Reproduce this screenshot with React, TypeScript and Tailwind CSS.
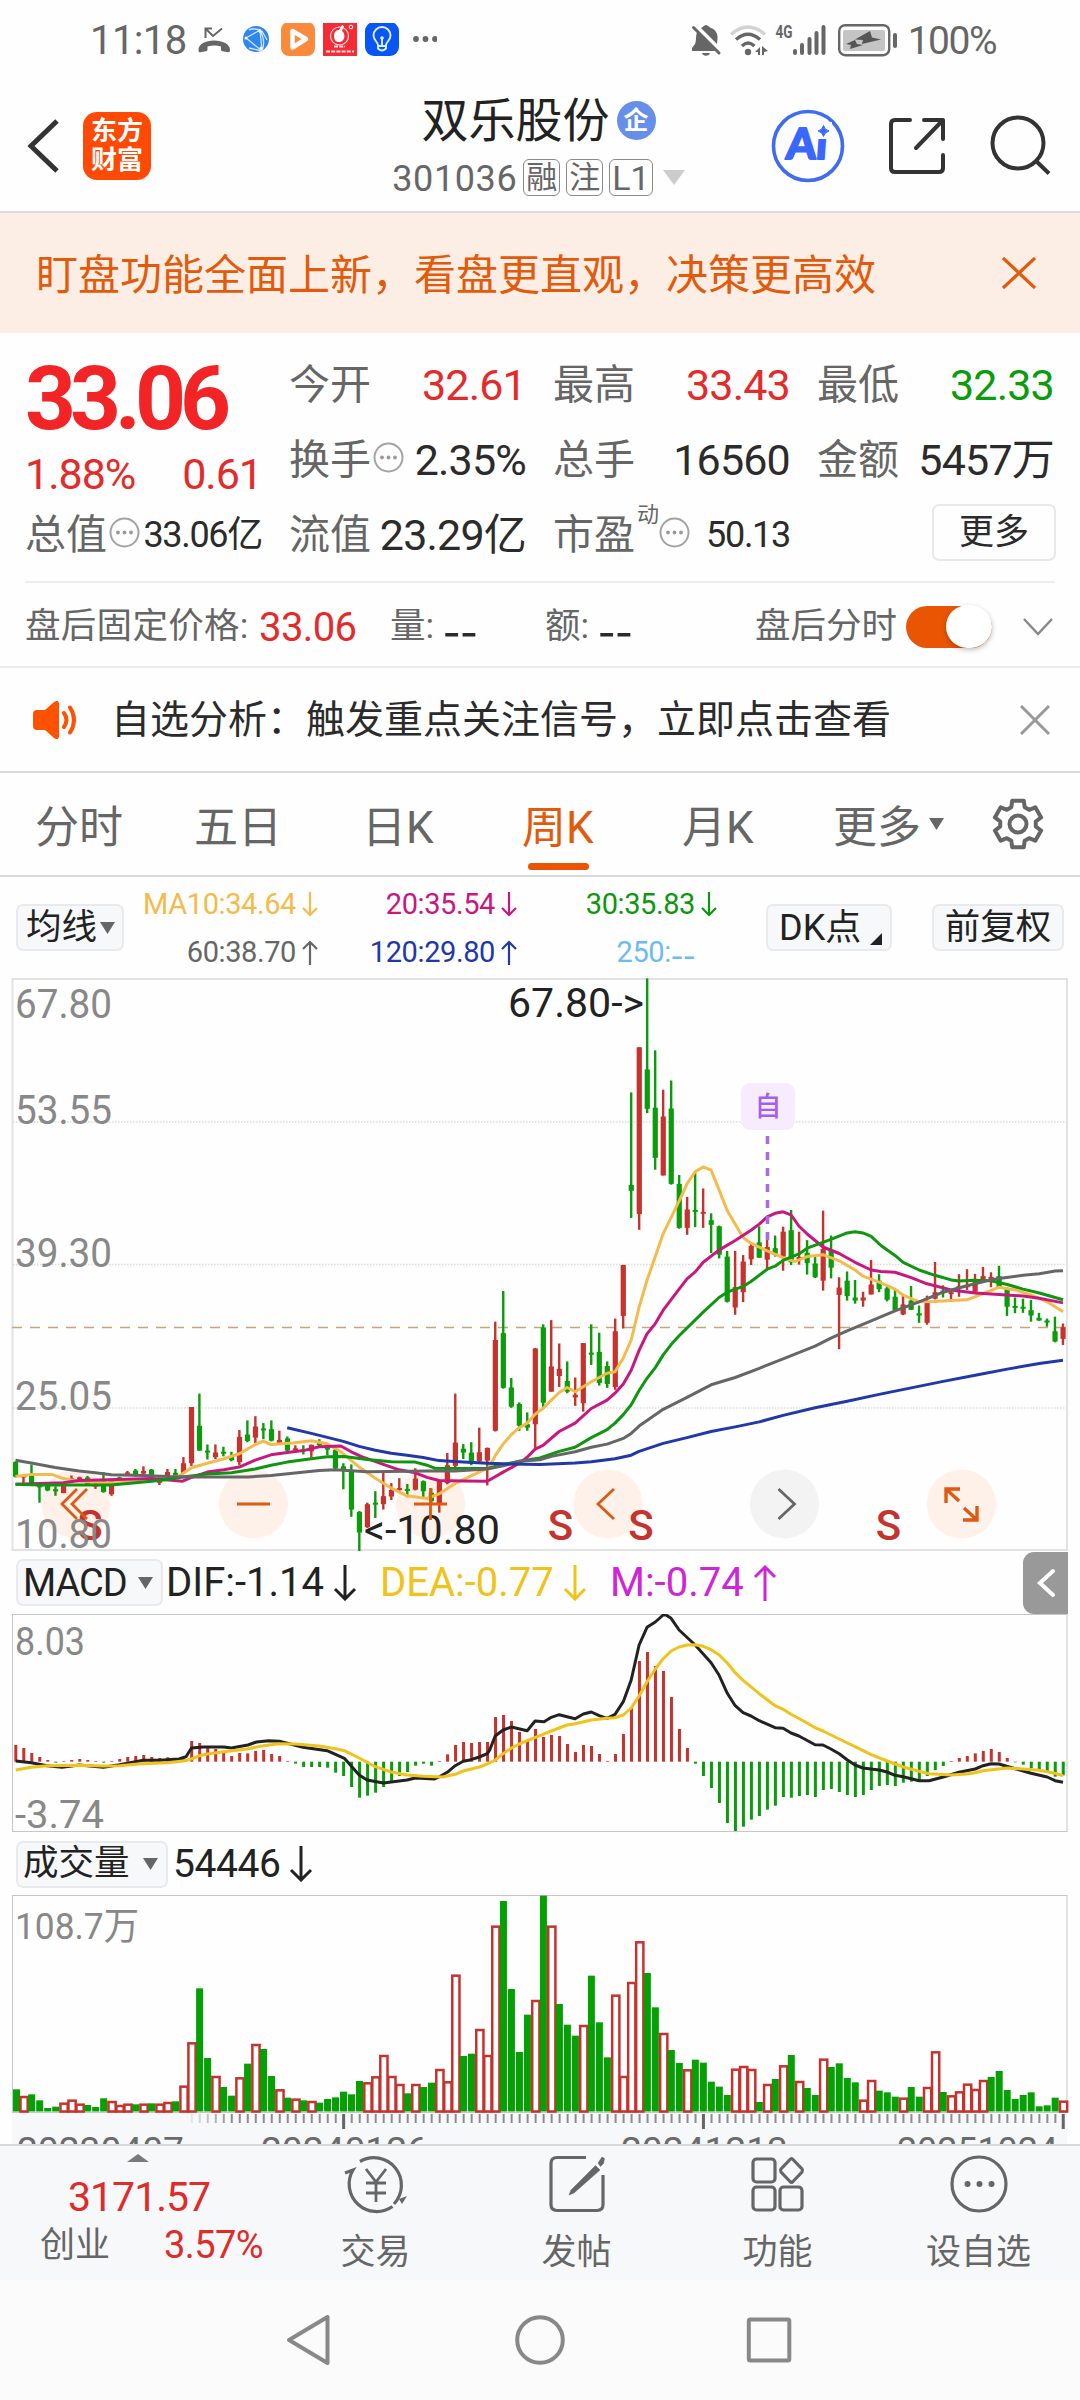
import type { ReactNode } from 'react';

// x step between two weekly bars, in chart units
const STEP = 23.22;
const UNIT_X = 2.904;
const RED = '#c6322d';
const GREEN = '#0a9c0a';

// [rising, high, body top, body bottom, low]
const candles: number[][] = [
    [0, 1310, 1312, 1350, 1352], [1, 1345, 1346, 1352, 1368], [0, 1318, 1347, 1368, 1370], [0, 1370, 1370, 1378, 1418],
    [0, 1368, 1370, 1386, 1388], [0, 1375, 1383, 1388, 1400], [1, 1368, 1370, 1393, 1393], [1, 1347, 1354, 1358, 1360],
    [1, 1350, 1352, 1357, 1360], [0, 1348, 1352, 1372, 1374], [1, 1360, 1368, 1376, 1382], [0, 1338, 1360, 1390, 1392],
    [1, 1358, 1360, 1396, 1400], [0, 1350, 1352, 1356, 1358], [1, 1335, 1339, 1345, 1348], [0, 1330, 1334, 1345, 1350],
    [1, 1323, 1335, 1342, 1348], [0, 1330, 1332, 1348, 1350], [1, 1352, 1355, 1366, 1372], [1, 1330, 1338, 1350, 1352],
    [0, 1330, 1340, 1350, 1352], [1, 1299, 1315, 1340, 1342], [1, 1168, 1168, 1315, 1322], [0, 1133, 1217, 1282, 1282],
    [0, 1266, 1282, 1287, 1305], [1, 1266, 1287, 1299, 1304], [0, 1272, 1285, 1290, 1297], [0, 1285, 1297, 1307, 1310],
    [1, 1228, 1246, 1312, 1320], [0, 1203, 1240, 1257, 1260], [1, 1192, 1219, 1248, 1262], [0, 1210, 1224, 1228, 1252],
    [0, 1203, 1226, 1256, 1258], [1, 1230, 1254, 1262, 1264], [0, 1245, 1250, 1282, 1284], [1, 1268, 1276, 1280, 1282],
    [0, 1268, 1278, 1282, 1292], [1, 1266, 1267, 1284, 1300], [0, 1252, 1262, 1268, 1272], [0, 1270, 1274, 1279, 1294],
    [0, 1276, 1280, 1328, 1330], [0, 1315, 1323, 1335, 1383], [0, 1318, 1335, 1436, 1455], [0, 1440, 1442, 1496, 1545],
    [1, 1418, 1422, 1482, 1484], [0, 1388, 1418, 1422, 1458], [1, 1340, 1401, 1422, 1436], [1, 1367, 1385, 1402, 1411],
    [1, 1354, 1380, 1384, 1387], [0, 1369, 1382, 1386, 1404], [1, 1328, 1355, 1384, 1386], [0, 1360, 1362, 1388, 1404],
    [0, 1381, 1392, 1414, 1420], [1, 1360, 1362, 1422, 1444], [1, 1288, 1320, 1367, 1370], [1, 1133, 1261, 1322, 1326],
    [0, 1265, 1277, 1287, 1304], [0, 1260, 1287, 1316, 1320], [1, 1222, 1286, 1310, 1312], [1, 1274, 1275, 1308, 1373],
    [1, 945, 993, 1230, 1232], [0, 865, 975, 1118, 1120], [0, 1092, 1117, 1167, 1170], [0, 1156, 1160, 1217, 1230],
    [0, 1182, 1213, 1222, 1230], [1, 1014, 1015, 1213, 1275], [0, 952, 960, 1157, 1172], [1, 941, 1062, 1128, 1128],
    [1, 1002, 1068, 1087, 1116], [0, 1049, 1100, 1128, 1132], [1, 1091, 1136, 1143, 1165], [1, 1001, 1001, 1158, 1180],
    [0, 952, 1026, 1031, 1058], [0, 974, 1024, 1105, 1112], [0, 1049, 1061, 1108, 1118], [1, 937, 970, 1116, 1123],
    [1, 797, 797, 930, 963], [0, 346, 588, 603, 674], [1, 228, 228, 664, 705], [0, 48, 286, 389, 400],
    [0, 236, 386, 517, 548], [1, 339, 409, 563, 563], [0, 315, 388, 585, 587], [0, 562, 585, 700, 702],
    [1, 619, 652, 700, 718], [0, 556, 653, 658, 698], [1, 597, 658, 663, 700], [0, 662, 680, 692, 766],
    [0, 694, 696, 770, 780], [0, 760, 775, 893, 895], [1, 760, 855, 908, 927], [1, 771, 788, 868, 894],
    [1, 738, 747, 782, 797], [0, 696, 738, 778, 778], [1, 728, 750, 783, 805], [0, 720, 753, 770, 775],
    [1, 697, 710, 775, 812], [0, 653, 706, 790, 797], [1, 710, 776, 780, 796], [0, 732, 765, 792, 822],
    [0, 775, 793, 829, 831], [1, 655, 755, 838, 864], [0, 720, 760, 804, 832], [1, 829, 856, 875, 1017],
    [0, 814, 838, 878, 890], [0, 836, 882, 890, 898], [1, 867, 882, 890, 906], [1, 784, 848, 874, 874],
    [0, 821, 838, 860, 868], [0, 850, 858, 888, 892], [0, 862, 880, 915, 915], [1, 874, 900, 926, 928],
    [0, 852, 890, 914, 914], [0, 903, 923, 929, 948], [1, 877, 893, 948, 953], [1, 789, 868, 885, 887],
    [0, 850, 864, 870, 882], [1, 862, 868, 872, 890], [1, 821, 852, 857, 880], [1, 808, 850, 855, 862],
    [1, 820, 840, 867, 868], [1, 802, 826, 838, 842], [1, 816, 828, 838, 855], [0, 799, 826, 855, 857],
    [0, 855, 858, 906, 930], [0, 882, 904, 908, 923], [0, 885, 906, 910, 922], [0, 888, 915, 929, 945],
    [0, 922, 935, 942, 943], [0, 937, 942, 946, 958], [0, 932, 970, 997, 999], [1, 950, 960, 990, 1006],
];

const averages = [
    {
        color: '#f3bb4c',
        points: '45,1350 91,1344 150,1344 184,1355 230,1362 300,1366 347,1366 416,1362 480,1354 520,1348 556,1327 602,1315 648,1304 695,1290 741,1266 764,1257 787,1266 850,1262 904,1256 950,1264 990,1285 1043,1325 1090,1354 1136,1380 1182,1400 1240,1407 1275,1395 1322,1368 1368,1348 1422,1325 1438,1295 1461,1265 1485,1240 1508,1222 1531,1210 1554,1187 1577,1172 1601,1150 1624,1130 1647,1117 1670,1128 1717,1102 1763,1080 1786,1076 1810,1040 1833,993 1856,907 1879,837 1903,775 1926,715 1972,630 1995,585 2019,553 2042,541 2065,549 2088,600 2112,655 2158,725 2181,740 2228,760 2274,778 2308,788 2344,775 2390,770 2437,786 2483,810 2506,826 2553,842 2599,860 2623,876 2669,893 2715,892 2762,890 2808,888 2855,872 2901,855 2948,862 2994,875 3041,893 3087,919',
    },
    {
        color: '#c8187f',
        points: '45,1370 184,1366 230,1360 370,1357 440,1355 530,1362 556,1352 602,1338 650,1332 695,1325 741,1307 787,1293 834,1287 881,1282 927,1272 990,1270 1020,1285 1050,1298 1113,1318 1159,1332 1206,1340 1240,1352 1275,1360 1345,1361 1415,1362 1461,1338 1508,1315 1530,1300 1554,1278 1577,1268 1624,1232 1670,1210 1717,1172 1763,1150 1786,1132 1810,1108 1833,1072 1856,1020 1879,977 1903,950 1926,915 1972,860 1995,833 2019,815 2042,790 2088,758 2135,733 2181,706 2205,690 2228,671 2251,662 2274,658 2297,666 2320,695 2344,716 2390,750 2437,767 2483,790 2530,810 2558,814 2599,816 2646,830 2692,846 2762,862 2832,870 2901,874 2971,878 3018,884 3087,896',
    },
    {
        color: '#0e960e',
        points: '45,1370 114,1372 323,1372 370,1368 440,1362 480,1358 520,1352 602,1343 672,1340 741,1330 787,1320 834,1312 904,1303 950,1298 1000,1297 1066,1305 1136,1311 1206,1312 1240,1320 1262,1328 1415,1329 1450,1320 1510,1310 1568,1301 1624,1284 1670,1273 1717,1248 1763,1227 1786,1210 1810,1188 1833,1162 1856,1125 1879,1093 1903,1065 1926,1032 1949,1005 1972,982 2042,920 2088,882 2112,868 2158,853 2181,840 2228,808 2251,800 2274,785 2320,768 2344,753 2413,730 2460,713 2483,710 2506,713 2530,722 2558,746 2599,772 2623,790 2669,810 2715,824 2762,836 2785,839 2832,837 2878,838 2925,848 2971,860 3018,870 3087,888',
    },
    {
        color: '#666666',
        points: '45,1307 91,1314 160,1326 230,1335 277,1340 323,1345 416,1347 486,1350 556,1351 720,1351 787,1347 850,1341 927,1334 974,1332 1066,1337 1240,1335 1322,1335 1415,1330 1461,1322 1508,1310 1568,1306 1601,1297 1670,1285 1717,1273 1763,1265 1810,1250 1833,1237 1856,1218 1926,1174 1995,1143 2065,1110 2135,1091 2205,1067 2274,1042 2367,1009 2413,988 2460,969 2530,943 2599,917 2669,893 2739,868 2808,851 2878,836 2901,832 2971,824 3018,820 3064,813 3087,812',
    },
    {
        color: '#2138a8',
        points: '834,1222 904,1237 997,1258 1043,1271 1090,1281 1136,1289 1182,1294 1229,1300 1275,1308 1345,1312 1415,1315 1485,1317 1568,1318 1670,1314 1717,1311 1786,1303 1833,1294 1856,1284 1926,1263 1995,1248 2065,1232 2135,1220 2205,1207 2274,1190 2367,1170 2460,1153 2553,1135 2646,1118 2739,1101 2832,1085 2925,1069 3018,1054 3087,1046',
    },
];

const macd = [
    615, 624, 639, 651, 660, 668, 664, 660, 657, 660, 663, 668, 663, 657, 651, 648, 645, 651, 654, 652, 656, 650,
    603, 609, 619, 627, 639, 648, 639, 640, 633, 630, 642, 648, 663, 671, 681, 681, 681, 683, 698, 708, 741, 773,
    767, 758, 741, 723, 708, 696, 677, 671, 677, 663, 643, 615, 606, 609, 606, 606, 531, 525, 543, 576, 603, 567,
    591, 585, 588, 612, 636, 615, 618, 642, 663, 642, 582, 502, 363, 336, 378, 393, 471, 567, 624, 671, 708, 744,
    789, 849, 873, 860, 839, 828, 809, 797, 771, 773, 768, 765, 771, 750, 747, 756, 765, 771, 765, 750, 738, 735,
    738, 728, 725, 720, 708, 690, 678, 663, 654, 648, 640, 633, 627, 636, 654, 665, 674, 684, 690, 696, 710, 706,
];

const difLine =
    '46,663 91,668 137,677 180,682 230,675 300,682 347,674 416,661 463,661 520,657 540,650 556,624 590,621 650,621 672,624 720,615 745,606 780,602 811,604 840,611 880,622 950,632 1000,655 1020,678 1043,705 1066,720 1113,729 1182,720 1206,714 1262,717 1275,711 1299,697 1322,677 1345,664 1368,659 1392,651 1415,641 1422,630 1438,588 1461,570 1485,561 1531,572 1554,543 1580,545 1601,532 1624,524 1647,530 1670,536 1694,522 1717,516 1740,527 1763,535 1786,523 1810,485 1833,420 1856,315 1879,262 1903,246 1926,225 1933,224 1949,235 1972,270 2019,315 2065,368 2088,405 2112,460 2135,497 2158,518 2181,528 2205,542 2251,563 2274,565 2297,579 2320,588 2367,614 2390,615 2413,627 2437,641 2460,659 2483,675 2506,684 2553,690 2576,696 2599,706 2623,710 2669,722 2698,722 2739,711 2785,697 2832,687 2855,677 2878,671 2901,672 2948,686 2994,700 3041,711 3064,722 3087,727';
const deaLine =
    '46,690 91,682 137,677 230,676 300,678 347,677 400,672 486,668 532,663 556,657 579,647 602,642 650,635 717,627 764,617 811,611 857,612 927,618 974,626 1000,632 1043,654 1090,680 1136,696 1182,705 1229,709 1285,711 1322,703 1345,693 1392,681 1415,672 1438,660 1461,641 1485,624 1508,612 1531,602 1568,587 1601,573 1647,555 1670,551 1717,540 1763,535 1786,533 1810,525 1833,504 1856,468 1879,425 1903,387 1926,356 1949,333 1972,321 1995,315 2019,314 2042,319 2065,329 2088,344 2112,369 2135,398 2158,421 2205,461 2251,497 2274,508 2297,523 2344,549 2367,563 2390,573 2437,597 2483,620 2530,644 2576,663 2623,681 2669,694 2698,701 2762,705 2808,702 2832,698 2855,692 2925,684 2971,687 3018,691 3064,700 3087,707';

// r = rising week (hollow), g = falling week (solid)
const volumes = (
    'g778 r798 g793 g811 g834 g830 r818 r809 r821 g825 g831 g805 r813 r825 r821 g823 r821 g820 r821 r816 g814 r767 ' +
    'r637 g475 g684 r738 g771 g797 r742 g701 r642 g657 g738 r778 g803 r806 g811 r813 g818 g807 g802 g785 g793 g753 ' +
    'r757 r739 r675 r738 r762 g790 r762 g771 g758 r717 r754 r434 g678 g671 r597 r675 r287 g213 g477 g666 g554 r510 ' +
    'g197 r287 g522 g584 g617 r585 g437 g577 g682 r494 r738 r456 r334 g429 g532 r609 g660 g699 r718 g689 g698 g755 ' +
    'g770 g795 r716 r708 r717 g816 r762 g747 r706 g675 r753 g774 g795 r686 g711 g700 g744 g757 r809 r750 g782 g787 ' +
    'g800 r803 g771 g800 r771 r664 g786 r796 r784 r761 r777 r750 g741 g723 g780 g807 g795 g787 g829 g826 g803 r812'
).split(' ');

const barX = (i: number) => (45 + STEP * i) / UNIT_X;
const priceY = (v: number) => v / 2.613 - 18;
const macdY = (v: number) => v / 3 - 74;
const volumeY = (v: number) => v / 3 - 65;

function toPath(points: string, y: (v: number) => number) {
    return points
        .split(' ')
        .map((p) => {
            const [a, b] = p.split(',').map(Number);
            return `${(a / UNIT_X).toFixed(1)},${y(b).toFixed(1)}`;
        })
        .join(' ');
}

function Arrow({ up = false, big = false }: { up?: boolean; big?: boolean }) {
    return (
        <svg
            className={big ? 'h-[36px] w-[24px]' : 'h-[25px] w-[16px]'}
            viewBox={big ? '0 0 24 36' : '0 0 16 25'}
            fill="none"
            stroke="currentColor"
            strokeWidth={big ? 3 : 2.2}
        >
            {big ? (
                <path d={up ? 'M12 36V2M2 12L12 2l10 10' : 'M12 0v34M2 24l10 10 10-10'} />
            ) : (
                <path d={up ? 'M8 25V2M1 9l7-7 7 7' : 'M8 0v23M1 16l7 7 7-7'} />
            )}
        </svg>
    );
}

function Triangle({ className = '' }: { className?: string }) {
    return (
        <svg className={`h-[12px] w-[15px] ${className}`} viewBox="0 0 15 12" fill="#666">
            <path d="M0 0h15L7.5 12z" />
        </svg>
    );
}

// wide placeholder for a missing value
function Dashes({ className = '' }: { className?: string }) {
    return <span className={`font-['Noto_Sans_CJK_SC',sans-serif] ${className}`}>--</span>;
}

function InfoDots() {
    return (
        <svg className="mb-[6px] h-[31px] w-[31px] shrink-0" viewBox="0 0 31 31" fill="#999">
            <circle cx="15.5" cy="15.5" r="14" fill="none" stroke="#a3a3a3" strokeWidth="2" />
            <circle cx="9" cy="15.5" r="1.9" />
            <circle cx="15.5" cy="15.5" r="1.9" />
            <circle cx="22" cy="15.5" r="1.9" />
        </svg>
    );
}

function StatusBar() {
    return (
        <div className="flex h-[80px] items-center pr-[84px] pl-[90px] text-[#666]">
            <span className="w-[107px] pt-[2px] text-[40px] tracking-[-0.6px]">11:18</span>
            <svg className="h-[34px] w-[240px]" viewBox="197 23 240 34">
                <g fill="none" stroke="#666" strokeWidth="2">
                    <path d="M212 28.500h-6.500V38M206 29l7 7 9-7.500" />
                </g>
                <path fill="#666" d="M198.500 50c0-6 7-9.500 15.500-9.500s16 3.500 16 9.500c0 2-.7 2.500-2 2.300l-5.500-1c-1-.2-1.500-.8-1.500-2v-2.800c-4.500-1.300-9-1.300-13.500 0v2.800c0 1.200-.5 1.800-1.500 2l-5.500 1c-1.300.2-2-.3-2-2.300z" />
                <circle cx="256" cy="39" r="13" fill="#2d86f2" />
                <g fill="none" stroke="#cfe4ff" strokeWidth="1.300">
                    <path d="M246 38l14-8 2 21-16-13M260 30q-8-2-11 0M262 51q4-10-2-21M249 48l13 3M262 31l5 9" />
                </g>
                <g fill="#fff">
                    <circle cx="246" cy="38" r="1.500" />
                    <circle cx="260" cy="31" r="1.700" />
                    <circle cx="261" cy="48" r="1.500" />
                </g>
                <rect x="281" y="22" width="34" height="34" rx="8" fill="#fb8a3c" />
                <path d="M292.500 31v16.500l13.500-8.500z" fill="none" stroke="#fff" strokeWidth="4.500" strokeLinejoin="round" />
                <rect x="323" y="22" width="34" height="34" fill="#f52b35" />
                <circle cx="339.500" cy="36" r="9" fill="none" stroke="#ffd9d9" strokeWidth="1.200" />
                <path d="M334 36c0-5 3-6 5-6l3-5 2 1-2 5c4 3 3 11-3 11-3 0-5-2-5-6z" fill="#fff" />
                <circle cx="351" cy="27" r="1.800" fill="none" stroke="#fff" />
                <path d="M334 46.500h11M326 51.500h28" stroke="#ffdede" strokeWidth="2" strokeDasharray="4 1.200" />
                <rect x="365" y="22" width="34" height="34" rx="9" fill="#0a55f5" />
                <g fill="none" stroke="#d9f1ff" strokeWidth="1.900">
                    <path d="M378 45c0-3-4.500-4.500-4.500-9.500a8.500 8.500 0 0117 0c0 5-4.500 6.500-4.500 9.500M378 46h8v2.500q-4 4-8 0zM382 45v-6" />
                </g>
                <circle cx="382" cy="38" r="1.800" fill="#d9f1ff" />
                <g fill="#666">
                    <circle cx="416" cy="39" r="2.900" />
                    <circle cx="425.500" cy="39" r="2.900" />
                    <circle cx="435" cy="39" r="2.900" />
                </g>
            </svg>
            <svg className="ml-auto h-[34px] w-[208px]" viewBox="690 22 208 34">
                <g fill="#666">
                    <path d="M701 27c2-.6 3-3 5-3s3 2.400 5 3c5 2 7 6 6.500 11l-.5 5-15.500-15.500zM697 31l18.500 19H692v-3l3-4c1.500-3 .5-8 2-12zM702 52h8c-1 3.500-7 3.500-8 0z" />
                </g>
                <path d="M693.500 26.500L719 52" stroke="#666" strokeWidth="3" strokeLinecap="round" />
                <g fill="none" strokeWidth="3.400">
                    <path d="M731 33.500q17-15 34 0" stroke="#d2d2d2" />
                    <path d="M736 38.500q12-10.500 24 0M742 45q6-6 12.500 0" stroke="#666" />
                </g>
                <circle cx="748" cy="51" r="3.200" fill="#666" />
                <path d="M755 51l5-5v8h-2v-3zM762 45l6 5-4 1v3h-2z" fill="#666" />
                <text x="775.500" y="36.500" textLength="17" lengthAdjust="spacingAndGlyphs" fontSize="18" fontWeight="700" fill="#666">
                    4G
                </text>
                <g stroke="#666" strokeWidth="4" strokeLinecap="round">
                    <path d="M795 50v2M802 44v8M809.500 38v14M816.500 32v20M823.500 26v26" />
                </g>
                <rect x="839.200" y="24.200" width="50" height="30" rx="6" fill="none" stroke="#666" strokeWidth="2.400" />
                <rect x="843" y="29" width="42" height="21" rx="2" fill="#c4c4c4" />
                <path d="M870 30l-15 8.500 8 .5-1 4 19-4.500-9-2zM855 39l-9 4 5 1-1 4 13-4-6-1z" fill="#555" />
                <path d="M895 34v11" stroke="#666" strokeWidth="4" strokeLinecap="round" />
            </svg>
            <span className="ml-[10px] pt-[2px] text-[39px] tracking-[-1.5px]">100%</span>
        </div>
    );
}

function Tag({ children }: { children: ReactNode }) {
    return (
        <span className="flex h-[37px] min-w-[37px] items-center justify-center rounded-[6px] border border-[#8a8a8a] px-[2px] text-[31px]">
            {children}
        </span>
    );
}

function Header() {
    return (
        <header className="flex h-[133px] items-center border-b-2 border-[#dadada] pl-[26px]">
            <svg className="h-[56px] w-[34px]" viewBox="0 0 34 56" fill="none" stroke="#333" strokeWidth="5">
                <path d="M31 3L5 28l26 25" strokeLinejoin="miter" />
            </svg>
            <div className="ml-[23px] flex h-[68px] w-[68px] flex-col items-center justify-center rounded-[14px] bg-[#ff4a05] text-[26px] leading-[29px] font-bold text-white">
                <span>东方</span>
                <span>财富</span>
            </div>
            <div className="ml-[215px] flex w-[345px] flex-col items-center">
                <div className="flex h-[52px] items-center text-[47px] text-[#222]">
                    <span>双乐股份</span>
                    <span className="ml-[7px] flex h-[39px] w-[39px] items-center justify-center rounded-full bg-[#658fe8] text-[25px] font-bold text-white">
                        企
                    </span>
                </div>
                <div className="mt-[12px] flex h-[38px] items-center gap-[6px] text-[#666]">
                    <span className="pt-[2px] text-[36px] tracking-[0.6px]">301036</span>
                    <Tag>融</Tag>
                    <Tag>注</Tag>
                    <Tag>
                        <span className="text-[34px]">L1</span>
                    </Tag>
                    <svg className="ml-[4px] h-[15px] w-[22px]" viewBox="0 0 22 15" fill="#ccc">
                        <path d="M0 0h22L11 15z" />
                    </svg>
                </div>
            </div>
            <svg className="ml-[59px] h-[76px] w-[76px]" viewBox="0 0 76 76">
                <circle cx="38" cy="38" r="34.500" fill="none" stroke="#3f6bf0" strokeWidth="3.600" />
                <g transform="skewX(-4)" fill="#3a68ff" stroke="#3a68ff" strokeWidth="1.800" strokeLinejoin="round">
                    <text x="19" y="51" fontSize="43" fontWeight="900" fontFamily="Lato, sans-serif" textLength="41" lengthAdjust="spacingAndGlyphs">
                        Ai
                    </text>
                </g>
                <rect x="46" y="14" width="16" height="17" fill="#fff" />
                <path d="M53.500 17.500q1 4.500 5.500 5.500-4.500 1-5.500 5.500-1-4.500-5.500-5.500 4.500-1 5.500-5.500z" fill="#3a68ff" stroke="#3a68ff" />
            </svg>
            <svg className="ml-[40px] h-[62px] w-[62px]" viewBox="0 0 62 62" fill="none" stroke="#333" strokeWidth="4" strokeLinecap="round" strokeLinejoin="round">
                <path d="M24 5H9Q5 5 5 9v44q0 4 4 4h44q4 0 4-4V40M38 5h19v19M57 5L30 33" />
            </svg>
            <svg className="ml-[39px] h-[66px] w-[66px]" viewBox="0 0 66 66" fill="none" stroke="#333" strokeWidth="4">
                <circle cx="31" cy="30" r="25.500" />
                <path d="M48 47l14 13.500" />
            </svg>
        </header>
    );
}

function Notice() {
    return (
        <div className="flex h-[120px] items-center bg-[#fceee4] pr-[44px] pl-[36px] text-[#e25a0c]">
            <span className="pt-[6px] text-[42px]">盯盘功能全面上新，看盘更直观，决策更高效</span>
            <svg className="ml-auto h-[32px] w-[34px]" viewBox="0 0 34 32" fill="none" stroke="currentColor" strokeWidth="3.200">
                <path d="M1 1l32 30M33 1L1 31" />
            </svg>
        </div>
    );
}

interface QuoteProps {
    label: string;
    value: string;
    info?: boolean;
    sup?: string;
    small?: boolean;
    color?: string;
}

function Quote({ label, value, info, sup, small, color = 'text-[#2b2b2b]' }: QuoteProps) {
    return (
        <div className="flex items-center whitespace-nowrap">
            <span className="text-[41px] text-[#666]">{label}</span>
            {sup && <span className="mb-[40px] -mr-[2px] ml-[2px] text-[22px] text-[#666]">{sup}</span>}
            {info && (
                <span className="ml-[2px] flex">
                    <InfoDots />
                </span>
            )}
            <span className={`ml-auto ${small ? 'text-[36px] tracking-[-1.3px]' : 'text-[43px] tracking-[-0.8px]'} ${color}`}>
                {value}
            </span>
        </div>
    );
}

function QuotePanel() {
    return (
        <section className="mx-[25px] h-[250px] border-b-2 border-[#ededed] pt-[15px]">
            <div className="grid grid-cols-[237px_237px_237px_237px] grid-rows-[75px_75px_74px] gap-x-[27px]">
                <div className="row-span-2 flex flex-col text-[#e42b2c]">
                    <span className="mt-[5px] text-[89px] leading-[92px] font-bold tracking-[-6px] text-[#f22426]">33.06</span>
                    <div className="mt-[8px] flex justify-between text-[43px] tracking-[-1px]">
                        <span>1.88%</span>
                        <span>0.61</span>
                    </div>
                </div>
                <Quote label="今开" value="32.61" color="text-[#e42b2c]" />
                <Quote label="最高" value="33.43" color="text-[#e42b2c]" />
                <Quote label="最低" value="32.33" color="text-[#0a9c0a]" />
                <Quote label="换手" value="2.35%" info />
                <Quote label="总手" value="16560" />
                <Quote label="金额" value="5457万" />
                <Quote label="总值" value="33.06亿" info small />
                <Quote label="流值" value="23.29亿" />
                <Quote label="市盈" value="50.13" sup="动" info small />
                <div className="mb-[6px] flex h-[57px] w-[124px] translate-x-[2px] items-center justify-center self-center justify-self-end rounded-[7px] border-2 border-[#e8e8e8] text-[35px] text-[#2b2b2b]">
                    更多
                </div>
            </div>
        </section>
    );
}

function AfterHours() {
    return (
        <div className="flex h-[85px] items-center border-b-2 border-[#ececec] pt-[4px] pr-[27px] pl-[25px] text-[35.5px] whitespace-nowrap text-[#666]">
            <span className="w-[234px] tracking-[0.3px]">盘后固定价格:</span>
            <span className="w-[131px] pt-[2px] text-[40px] tracking-[-0.6px] text-[#e42b2c]">33.06</span>
            <span className="w-[53px]">量:</span>
            <Dashes className="w-[102px] text-[50px] text-[#2b2b2b]" />
            <span className="w-[53px]">额:</span>
            <Dashes className="text-[50px] text-[#2b2b2b]" />
            <span className="ml-auto">盘后分时</span>
            <div className="ml-[9px] flex h-[42px] w-[86px] justify-end rounded-full bg-[#ea5504]">
                <div className="-mt-[1px] h-[43px] w-[46px] rounded-full bg-white shadow-[0_2px_5px_rgba(0,0,0,0.25)]" />
            </div>
            <svg className="ml-[31px] h-[18px] w-[30px]" viewBox="0 0 30 18" fill="none" stroke="#888" strokeWidth="2.500">
                <path d="M1 1l14 15L29 1" />
            </svg>
        </div>
    );
}

function Analysis() {
    return (
        <div className="flex h-[105px] items-center border-b-2 border-[#dadada] pr-[30px] pl-[33px]">
            <svg className="h-[38px] w-[46px]" viewBox="0 0 46 38" fill="#ff5200">
                <path d="M4 9h8L21 1q5-3 5 2v32q0 5-5 2l-9-8H4q-4 0-4-4V13q0-4 4-4z" />
                <path d="M31 12q5 7 0 14M37 6.500q8 12.500 0 25" fill="none" stroke="#ff5200" strokeWidth="4" strokeLinecap="round" />
            </svg>
            <span className="ml-[32px] pt-[2px] text-[39px] text-[#2b2b2b]">自选分析：触发重点关注信号，立即点击查看</span>
            <svg className="ml-auto h-[30px] w-[30px]" viewBox="0 0 30 30" fill="none" stroke="#999" strokeWidth="3">
                <path d="M1 1l28 28M29 1L1 29" />
            </svg>
        </div>
    );
}

const gearPoints = Array.from({ length: 6 })
    .flatMap((_, k) =>
        [
            [-22, 18],
            [-14, 24],
            [14, 24],
            [22, 18],
        ].map(([offset, r]) => {
            const a = ((k * 60 - 90 + offset) * Math.PI) / 180;
            return `${(27 + r * Math.cos(a)).toFixed(1)},${(27 + r * Math.sin(a)).toFixed(1)}`;
        }),
    )
    .join(' ');

function Tabs() {
    return (
        <nav className="flex h-[104px] items-center border-b-2 border-[#dadada] pl-[35px] text-[44px] whitespace-nowrap text-[#666]">
            <span className="w-[159px] pt-[7px]">分时</span>
            <span className="w-[168px] pt-[7px]">五日</span>
            <span className="w-[160px] pt-[7px]">日K</span>
            <span className="relative w-[160px] pt-[7px] text-[#e25a0c]">
                周K
                <span className="absolute top-[64px] left-[6px] h-[7px] w-[61px] rounded-full bg-[#ea5504]" />
            </span>
            <span className="w-[151px] pt-[7px]">月K</span>
            <span className="pt-[7px]">更多</span>
            <Triangle className="ml-[8px]" />
            <svg className="ml-[47px] h-[54px] w-[54px]" viewBox="0 0 54 54" fill="none" stroke="#666" strokeWidth="4" strokeLinejoin="round">
                <polygon points={gearPoints} />
                <circle cx="27" cy="27" r="8.500" />
            </svg>
        </nav>
    );
}

const pill = 'flex items-center rounded-[7px] border-2 border-[#e8eaee] bg-[#f6f8fa] text-[#222] whitespace-nowrap';

function AverageBar() {
    return (
        <div className="flex h-[101px] items-center pl-[16px]">
            <div className={`${pill} h-[47px] w-[108px] pl-[8px] text-[35.5px]`}>
                均线
                <Triangle className="ml-[3px]" />
            </div>
            <div className="grid grid-cols-[194px_199px_200px] grid-rows-[48px_48px] pt-[1px] text-[29px] tracking-[-0.4px] whitespace-nowrap">
                <span className="flex items-center justify-end gap-[6px] text-[#f3bb4c]">MA10:34.64<Arrow /></span>
                <span className="flex items-center justify-end gap-[6px] text-[#c8187f]">20:35.54<Arrow /></span>
                <span className="flex items-center justify-end gap-[6px] text-[#0e960e]">30:35.83<Arrow /></span>
                <span className="flex items-center justify-end gap-[6px] text-[#666]">60:38.70<Arrow up /></span>
                <span className="flex items-center justify-end gap-[6px] text-[#2138a8]">120:29.80<Arrow up /></span>
                <span className="flex items-center justify-end pr-[22px] text-[#6cbcf0]">
                    250:
                    <Dashes className="text-[36px]" />
                </span>
            </div>
            <div className={`${pill} ml-[49px] h-[47px] w-[126px] pl-[11px] text-[36px]`}>
                DK点
                <svg className="mt-[22px] ml-[9px] h-[12px] w-[12px]" viewBox="0 0 12 12" fill="#222">
                    <path d="M12 0v12H0z" />
                </svg>
            </div>
            <div className={`${pill} ml-[40px] h-[47px] w-[132px] justify-center text-[35.5px]`}>前复权</div>
        </div>
    );
}

function PriceChart() {
    const labels: [string, number][] = [
        ['67.80', 40],
        ['53.55', 145.5],
        ['39.30', 288.5],
        ['25.05', 431.5],
        ['10.80', 570],
    ];
    return (
        <svg className="block h-[573px] w-[1080px]" viewBox="0 0 1080 573">
            {[76, 253.5, 430.5, 608, 784.5, 961.5].map((x) => (
                <circle key={x} cx={x} cy="526" r="34.500" fill={x === 784.5 ? '#f3f3f3' : '#fef1e9'} />
            ))}
            <rect x="12.500" y="1" width="1054.500" height="571" fill="none" stroke="#e2e2e2" strokeWidth="2" />
            {[144, 286.5, 430].map((y) => (
                <path key={y} d={`M13 ${y}H1066`} stroke="#dcdcdc" strokeWidth="1.500" strokeDasharray="1.500 1.500" />
            ))}
            <path d="M12 349.500H1066" stroke="#c9a476" strokeWidth="1.500" strokeDasharray="10 8" />
            {['90', '560.5', '641', '888.5'].map((x) => (
                <text key={x} x={x} y="561.500" textAnchor="middle" fontSize="42" fontWeight="500" fill="#c6322d">
                    S
                </text>
            ))}
            {labels.map(([text, y]) => (
                <text key={text} x="15" y={y} fontSize="40" fill="#888" textLength="97" lengthAdjust="spacingAndGlyphs">
                    {text}
                </text>
            ))}
            {candles.map(([up, hi, top, bottom, lo], i) => (
                <g key={i} fill={up ? RED : GREEN}>
                    <rect x={barX(i) - 1.2} y={priceY(hi)} width="2.400" height={priceY(lo) - priceY(hi)} />
                    <rect x={barX(i) - 2.5} y={priceY(top)} width="5.200" height={Math.max(priceY(bottom) - priceY(top), 2)} />
                </g>
            ))}
            {averages.map((line) => (
                <polyline key={line.color} points={toPath(line.points, priceY)} fill="none" stroke={line.color} strokeWidth="3" strokeLinejoin="round" />
            ))}
            <text x="508" y="38.500" fontSize="40" fill="#222" textLength="136" lengthAdjust="spacingAndGlyphs">{'67.80->'}</text>
            <text x="364" y="565.500" fontSize="40" fill="#222" textLength="136" lengthAdjust="spacingAndGlyphs">{'<-10.80'}</text>
            <rect x="741" y="105" width="54" height="47" rx="9" fill="#f6ecfe" />
            <text x="768" y="138" textAnchor="middle" fontSize="27" fontWeight="500" fill="#a55fe8">自</text>
            <path d="M767.500 158v104" stroke="#a969e8" strokeWidth="3.600" strokeDasharray="8 8" />
            <g fill="none" stroke="#dd5a14" strokeWidth="2.800">
                <path d="M77 511L62 526l15 15M87 511L72 526l15 15" />
                <path d="M237 526h33M414 526h33M430.500 510v32" />
                <path d="M614 511l-16 15 16 15" />
                <path d="M778.500 511l16 15-16 15" stroke="#666" />
                <path d="M960 511h-14v14M946 511l13 12M963 542h14v-14M977 542l-13-12" strokeWidth="3.400" />
            </g>
        </svg>
    );
}

function MacdPanel() {
    return (
        <section>
            <div className="flex h-[63px] items-center pl-[16px] text-[40px] whitespace-nowrap">
                <div className={`${pill} h-[47px] w-[147px] pl-[5px] text-[38px]`}>
                    <span className="tracking-[-1px]">MACD</span>
                    <Triangle className="ml-[11px]" />
                </div>
                <span className="ml-[3px] flex w-[214px] items-center gap-[9px] text-[#222]">DIF:-1.14<Arrow big /></span>
                <span className="flex w-[230px] items-center gap-[9px] text-[#efc31c]">DEA:-0.77<Arrow big /></span>
                <span className="flex items-center gap-[9px] text-[#d024d8]">M:-0.74<Arrow big up /></span>
                <div className="mr-[12px] ml-auto flex h-[62px] w-[45px] items-center justify-center rounded-l-[11px] bg-[#999]">
                    <svg className="h-[30px] w-[18px]" viewBox="0 0 18 30" fill="none" stroke="#fff" strokeWidth="4" strokeLinecap="round">
                        <path d="M16 3L3 15l13 12" />
                    </svg>
                </div>
            </div>
            <svg className="block h-[219px] w-[1080px]" viewBox="0 0 1080 219">
                <rect x="12.500" y="0.500" width="1054.500" height="217" fill="none" stroke="#c6c6c6" />
                <text x="15" y="40.500" fontSize="38" fill="#888" textLength="70" lengthAdjust="spacingAndGlyphs">8.03</text>
                <text x="15" y="214" fontSize="38" fill="#888" textLength="89" lengthAdjust="spacingAndGlyphs">-3.74</text>
                {macd.map((v, i) => (
                    <rect
                        key={i}
                        x={barX(i) - 1.2}
                        y={Math.min(macdY(v), macdY(665))}
                        width="3"
                        height={Math.max(Math.abs(v - 665) / 3, 0.6)}
                        fill={v <= 665 ? RED : GREEN}
                    />
                ))}
                <polyline points={toPath(difLine, macdY)} fill="none" stroke="#222" strokeWidth="3" strokeLinejoin="round" />
                <polyline points={toPath(deaLine, macdY)} fill="none" stroke="#efc31c" strokeWidth="3" strokeLinejoin="round" />
            </svg>
        </section>
    );
}

function VolumePanel() {
    const dates: [string, number, number][] = [
        ['20230407', 17, 167],
        ['20240126', 261, 167],
        ['20241213', 621, 167],
        ['20251024', 897, 161],
    ];
    return (
        <section>
            <div className="flex h-[62px] items-center pl-[16px] text-[39px] whitespace-nowrap text-[#222]">
                <div className={`${pill} h-[47px] w-[152px] pl-[5px] text-[35.5px]`}>
                    成交量
                    <Triangle className="ml-[13px]" />
                </div>
                <span className="ml-[5px] flex items-center gap-[8px] tracking-[-0.4px]">54446<Arrow big /></span>
            </div>
            <svg className="block h-[249px] w-[1080px]" viewBox="0 0 1080 249">
                <rect x="12" y="218" width="1055" height="31" fill="#f7f8fa" />
                <rect x="12.500" y="0.500" width="1054.500" height="217" fill="none" stroke="#c6c6c6" />
                <text x="15" y="44" fontSize="37.500" fill="#888" textLength="124" lengthAdjust="spacingAndGlyphs">108.7万</text>
                {volumes.map((item, i) => {
                    const top = volumeY(Number(item.slice(1)));
                    return item[0] === 'g' ? (
                        <rect key={i} x={Math.max(barX(i) - 3.3, 13)} y={top} width="7" height={216.5 - top} fill="#04a004" />
                    ) : (
                        <rect key={i} x={barX(i) - 3} y={top + 1} width="7.200" height={215.5 - top} fill="#fff" stroke={RED} strokeWidth="2.500" />
                    );
                })}
                {volumes.map((_, i) => {
                    const major = i === 41 || i === 86 || i === 131;
                    return (
                        i > 21 && (
                            <rect
                                key={i}
                                x={barX(i) - (major ? 1.2 : 0.6)}
                                y="219"
                                width={major ? 3 : 2}
                                height={major ? 15 : 9}
                                fill={major ? '#666' : '#8c8c8c'}
                                opacity={Math.min(1, (i - 21) / 6)}
                            />
                        )
                    );
                })}
                {dates.map(([text, x, width]) => (
                    <text key={text} x={x} y="268" fontSize="37" fill="#6b6b6b" textLength={width} lengthAdjust="spacingAndGlyphs">
                        {text}
                    </text>
                ))}
            </svg>
        </section>
    );
}

function NavItem({ label, children }: { label: string; children: ReactNode }) {
    return (
        <div className="flex w-[201px] flex-col items-center pt-[7px]">
            <svg className="h-[62px] w-[72px]" viewBox="0 0 72 62" fill="none" stroke="#666" strokeWidth="3.200">
                {children}
            </svg>
            <span className="mt-[20px] text-[35px]">{label}</span>
        </div>
    );
}

function BottomNav() {
    return (
        <footer className="flex h-[136px] border-t-2 border-[#d6d8da] bg-[#f6f8fa] whitespace-nowrap text-[#666]">
            <div className="w-[275px]">
                <svg className="mt-[8px] ml-[127px] h-[8px] w-[22px]" viewBox="0 0 22 8" fill="#7a7a7a">
                    <path d="M0 8L11 0l11 8z" />
                </svg>
                <div className="mt-[15px] ml-[68px] text-[41px] tracking-[-1px] text-[#e02b2b]">3171.57</div>
                <div className="mt-[8px] flex items-center pl-[40px] text-[35px]">
                    创业
                    <span className="ml-[54px] text-[38px] tracking-[-0.6px] text-[#e02b2b]">3.57%</span>
                </div>
            </div>
            <NavItem label="交易">
                <path d="M20 8.500A27.500 27.500 0 0154 51" />
                <path d="M52.500 53.500A27.500 27.500 0 0113 17l-8 3" />
                <path d="M59 46l8-3-5 8z" fill="#666" strokeWidth="0" />
                <path d="M26 16l10 13 10-13M26 30h20M26 40h20M36 28v21" strokeWidth="2.800" />
            </NavItem>
            <NavItem label="发帖">
                <path d="M46 4.500H17q-6 0-6 6v41q0 6 6 6h40q6 0 6-6V22" transform="translate(-1)" />
                <path d="M54.500 12.500l4.500 4.500L33 40l-5 2 2-5z" fill="#666" strokeWidth="0.500" />
                <path d="M57 10l4-6 2.500 1.500-1 5-3 3z" fill="#666" strokeWidth="0.500" />
            </NavItem>
            <NavItem label="功能">
                <rect x="11" y="6" width="22" height="23" rx="3.500" />
                <rect x="11" y="34" width="22" height="23" rx="3.500" />
                <rect x="38" y="34" width="22" height="23" rx="3.500" />
                <path d="M48 6.500q1.500-2 3 0L60 16q1 1.500 0 3l-9 9.500q-1.500 1.500-3 0L39 19q-1-1.500 0-3z" />
            </NavItem>
            <NavItem label="设自选">
                <circle cx="36" cy="31" r="27" />
                <g fill="#666" stroke="none">
                    <circle cx="24.500" cy="31" r="3" />
                    <circle cx="36.500" cy="31" r="3" />
                    <circle cx="48.500" cy="31" r="3" />
                </g>
            </NavItem>
        </footer>
    );
}

function SystemNav() {
    return (
        <div className="flex h-[120px] items-center bg-[#fbfbfb] pl-[285px]">
            <svg className="h-[54px] w-[508px]" viewBox="285 2313 508 54" fill="none" stroke="#888" strokeWidth="4" strokeLinejoin="round">
                <path d="M327.500 2317v46L289 2340z" />
                <circle cx="540" cy="2340" r="22.800" />
                <rect x="748.800" y="2319.500" width="40.500" height="41" rx="1.500" />
            </svg>
        </div>
    );
}

export default function App() {
    return (
        <main className="h-[2400px] w-[1080px] overflow-hidden bg-[#fefefe] font-['Roboto','Noto_Sans_CJK_SC',sans-serif] leading-none">
            <StatusBar />
            <Header />
            <Notice />
            <QuotePanel />
            <AfterHours />
            <Analysis />
            <Tabs />
            <AverageBar />
            <PriceChart />
            <MacdPanel />
            <VolumePanel />
            <BottomNav />
            <SystemNav />
        </main>
    );
}
